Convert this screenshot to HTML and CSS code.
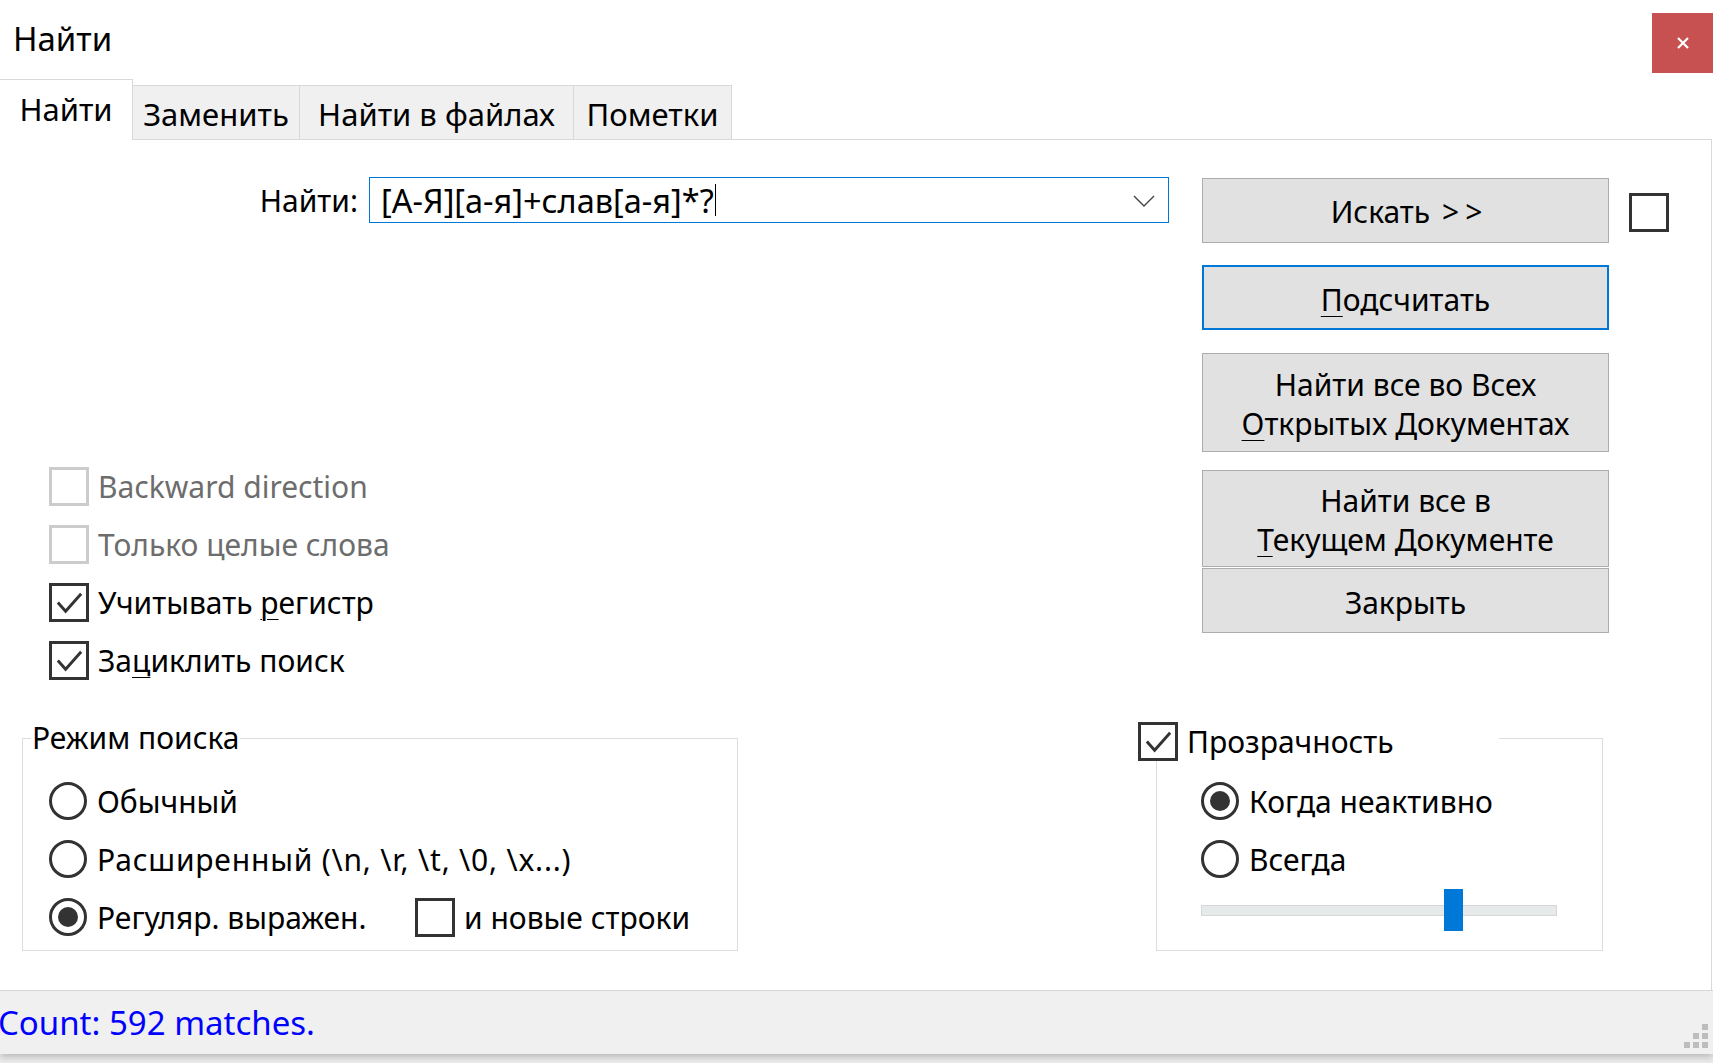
FILE: index.html
```html
<!DOCTYPE html>
<html lang="ru">
<head>
<meta charset="utf-8">
<title>Найти</title>
<link rel="stylesheet" href="styles.css">
</head>
<body>
<div class="window">
  <header class="titlebar">
    <span class="title">Найти</span>
    <button class="close" aria-label="Закрыть">
      <svg width="12" height="12" viewBox="0 0 12 12"><path d="M1 1 L11 11 M11 1 L1 11" stroke="#fff" stroke-width="2.2" fill="none"/></svg>
    </button>
  </header>

  <nav class="tabs">
    <div class="tab active">Найти</div>
    <div class="tab tab-replace">Заменить</div>
    <div class="tab tab-files">Найти в файлах</div>
    <div class="tab tab-marks">Пометки</div>
  </nav>

  <section class="panel">
    <div class="upper">
      <div class="left">
        <div class="find-row">
          <label class="find-label">Найти:</label>
          <div class="combo">
            <span class="combo-text">[А-Я][а-я]+слав[а-я]*?</span><span class="caret"></span>
            <svg class="chevron" width="22" height="12" viewBox="0 0 22 12"><polyline points="1,1 11,11 21,1" fill="none" stroke="#444" stroke-width="1.4"/></svg>
          </div>
        </div>
        <div class="checks">
          <div class="check disabled"><span class="box"></span><span>Backward direction</span></div>
          <div class="check disabled"><span class="box"></span><span>Только целые слова</span></div>
          <div class="check"><span class="box checked"><svg viewBox="0 0 34 34" width="33" height="33"><polyline points="5,17 13,26 29,8" fill="none" stroke="#333" stroke-width="3"/></svg></span><span>Учитывать <u>р</u>егистр</span></div>
          <div class="check"><span class="box checked"><svg viewBox="0 0 34 34" width="33" height="33"><polyline points="5,17 13,26 29,8" fill="none" stroke="#333" stroke-width="3"/></svg></span><span>За<u>ц</u>иклить поиск</span></div>
        </div>
      </div>

      <div class="actions">
        <button class="btn btn-find">Искать <span class="chevrons">&gt;&gt;</span></button>
        <button class="btn btn-count focused"><u>П</u>одсчитать</button>
        <button class="btn btn-all">Найти все во Всех<br><u>О</u>ткрытых Документах</button>
        <button class="btn btn-current">Найти все в<br><u>Т</u>екущем Документе</button>
        <button class="btn btn-close">Закрыть</button>
      </div>

      <div class="side-check"><span class="box"></span></div>
    </div>

    <div class="lower">
      <fieldset class="group mode">
        <legend>Режим поиска</legend>
        <div class="radio-row"><span class="radio"></span><span>Обычный</span></div>
        <div class="radio-row"><span class="radio"></span><span class="extended">Расширенный (\n, \r, \t, \0, \x...)</span></div>
        <div class="radio-row">
          <div class="radio-item"><span class="radio on"></span><span>Регуляр. выражен.</span></div>
          <div class="check inline"><span class="box"></span><span>и новые строки</span></div>
        </div>
      </fieldset>

      <fieldset class="group transp">
        <legend><span class="box checked"><svg viewBox="0 0 34 34" width="33" height="33"><polyline points="5,17 13,26 29,8" fill="none" stroke="#333" stroke-width="3"/></svg></span><span class="legend-label">Прозрачность</span></legend>
        <div class="radio-row"><span class="radio on"></span><span>Когда неактивно</span></div>
        <div class="radio-row"><span class="radio"></span><span>Всегда</span></div>
        <div class="slider">
          <div class="track"></div>
          <div class="thumb" style="left: 68.3%"></div>
        </div>
      </fieldset>
    </div>
  </section>

  <footer class="status">
    <span class="status-text">Count: 592 matches.</span>
    <svg class="grip" width="24" height="24" viewBox="0 0 24 24">
      <rect x="18" y="0" width="6" height="6" fill="#bdbdbd"/>
      <rect x="9" y="9" width="6" height="6" fill="#bdbdbd"/>
      <rect x="18" y="9" width="6" height="6" fill="#bdbdbd"/>
      <rect x="0" y="18" width="6" height="6" fill="#bdbdbd"/>
      <rect x="9" y="18" width="6" height="6" fill="#bdbdbd"/>
      <rect x="18" y="18" width="6" height="6" fill="#bdbdbd"/>
    </svg>
  </footer>
</div>
</body>
</html>
```

FILE: styles.css
```css
* { box-sizing: border-box; }
html, body { margin: 0; padding: 0; }
body {
  width: 1713px;
  height: 1063px;
  overflow: hidden;
  background: #ececec;
  font-family: "Noto Sans", "Open Sans", sans-serif;
  font-size: 30px;
  color: #000;
}

.window {
  width: 1713px;
  height: 1054px;
  background: #fff;
  display: flex;
  flex-direction: column;
  box-shadow: 0 3px 7px rgba(0, 0, 0, 0.22);
}

/* Title bar */
.titlebar {
  flex: none;
  height: 79px;
  display: flex;
  justify-content: space-between;
  align-items: flex-start;
}
.title {
  font-size: 33px;
  line-height: 40px;
  margin: 19px 0 0 13px;
}
.close {
  width: 61px;
  height: 60px;
  margin-top: 13px;
  padding: 0;
  border: 0;
  background: #c75050;
  display: flex;
  align-items: center;
  justify-content: center;
}

/* Tabs */
.tabs {
  flex: none;
  height: 61px;
  margin-bottom: -1px;
  display: flex;
  align-items: flex-end;
  position: relative;
  z-index: 1;
  font-size: 31px;
}
.tab {
  height: 55px;
  padding: 2px 0 0;
  background: #f0f0f0;
  border: 1px solid #d9d9d9;
  border-left: 0;
  display: flex;
  align-items: center;
  justify-content: center;
  white-space: nowrap;
}
.tab-replace { width: 167px; }
.tab-files { width: 274px; }
.tab-marks { width: 158px; }
.tab.active {
  width: 133px;
  height: 61px;
  padding: 0 0 2px;
  background: #fff;
  border-bottom: 0;
}

/* Panel */
.panel {
  flex: 1;
  margin-right: 1px;
  border-top: 1px solid #d9d9d9;
  border-right: 1px solid #d9d9d9;
  display: flex;
  flex-direction: column;
}
.upper {
  display: flex;
  height: 578px;
}
.left {
  width: 1202px;
  flex: none;
  padding-top: 37px;
}
.find-row {
  display: flex;
  align-items: center;
  height: 46px;
}
.find-label {
  width: 358px;
  text-align: right;
  margin-right: 11px;
}
.combo {
  width: 800px;
  height: 46px;
  border: 1px solid #0078d7;
  display: flex;
  align-items: center;
  padding-left: 11px;
  position: relative;
  font-size: 32.5px;
}
.combo-text { white-space: nowrap; }
.caret {
  width: 1px;
  height: 32px;
  background: #000;
  margin-left: 1px;
}
.chevron {
  position: absolute;
  right: 13px;
  top: 17px;
}

.checks {
  margin-top: 234px;
  display: flex;
  flex-direction: column;
}
.check {
  height: 58px;
  display: flex;
  align-items: center;
  gap: 9px;
  padding-left: 49px;
}
.box {
  width: 40px;
  height: 39px;
  border: 3px solid #333;
  background: #fff;
  display: flex;
  align-items: center;
  justify-content: center;
  flex: none;
}
.check.disabled { color: #6d6d6d; }
.check.disabled .box { border-color: #cccccc; }

/* Buttons */
.actions {
  width: 407px;
  flex: none;
  padding-top: 38px;
  display: flex;
  flex-direction: column;
}
.btn {
  font: inherit;
  color: #000;
  background: #e1e1e1;
  border: 1px solid #adadad;
  padding: 3px 0 0;
  line-height: 39px;
  text-align: center;
}
.btn-find { padding: 1px 0 0 8px; }
.chevrons { letter-spacing: 6px; margin-left: 4px; }
.btn u, .check u { text-underline-offset: 5px; text-decoration-thickness: 1px; }
.btn-find { height: 65px; }
.btn-count { height: 65px; margin-top: 22px; }
.btn-all { height: 99px; margin-top: 23px; }
.btn-current { height: 97px; margin-top: 18px; }
.btn-close { height: 65px; margin-top: 1px; }
.btn.focused { border: 2px solid #0078d7; }

.side-check {
  margin: 53px 0 0 20px;
}

/* Group boxes */
.lower {
  display: flex;
  align-items: flex-start;
}
.group {
  margin: 0;
  padding: 14px 0 0;
  border: 1px solid #dcdcdc;
  min-width: 0;
}
.group legend {
  padding: 0;
  line-height: 40px;
  height: 40px;
}
.mode {
  margin-left: 22px;
  width: 716px;
  height: 233px;
  padding-left: 26px;
}
.mode legend {
  margin-left: -18px;
  padding: 0 1px;
}
.transp {
  margin-left: 418px;
  width: 447px;
  height: 233px;
  padding-left: 44px;
}
.transp legend {
  width: 361px;
  margin-left: -63px;
  display: flex;
  align-items: flex-start;
  gap: 9px;
  background: #fff;
}
.transp legend .box { margin-top: 4px; }
.legend-label { margin-top: 4px; }

.radio-row {
  height: 58px;
  display: flex;
  align-items: center;
  gap: 10px;
  white-space: nowrap;
}
.extended { letter-spacing: 0.8px; }
.radio-item {
  width: 356px;
  display: flex;
  align-items: center;
  gap: 10px;
}
.radio {
  width: 38px;
  height: 38px;
  border: 3px solid #333;
  border-radius: 50%;
  flex: none;
  display: flex;
  align-items: center;
  justify-content: center;
}
.radio.on::after {
  content: "";
  width: 20px;
  height: 20px;
  border-radius: 50%;
  background: #333;
}
.check.inline {
  padding-left: 0;
  gap: 9px;
}

.slider {
  position: relative;
  width: 356px;
  height: 42px;
  margin-top: 1px;
  display: flex;
  align-items: center;
}
.track {
  width: 100%;
  height: 11px;
  background: #e7eaea;
  border: 1px solid #d6d6d6;
}
.thumb {
  position: absolute;
  top: 0;
  width: 19px;
  height: 42px;
  background: #0078d7;
}

/* Status bar */
.status {
  flex: none;
  height: 64px;
  background: #f0f0f0;
  border-top: 1px solid #d7d7d7;
  display: flex;
  align-items: center;
  justify-content: space-between;
}
.status-text {
  color: #0000ff;
  font-size: 33px;
  margin-left: -2px;
  white-space: nowrap;
}
.grip {
  align-self: flex-end;
  margin: 0 5px 6px 0;
}
```
